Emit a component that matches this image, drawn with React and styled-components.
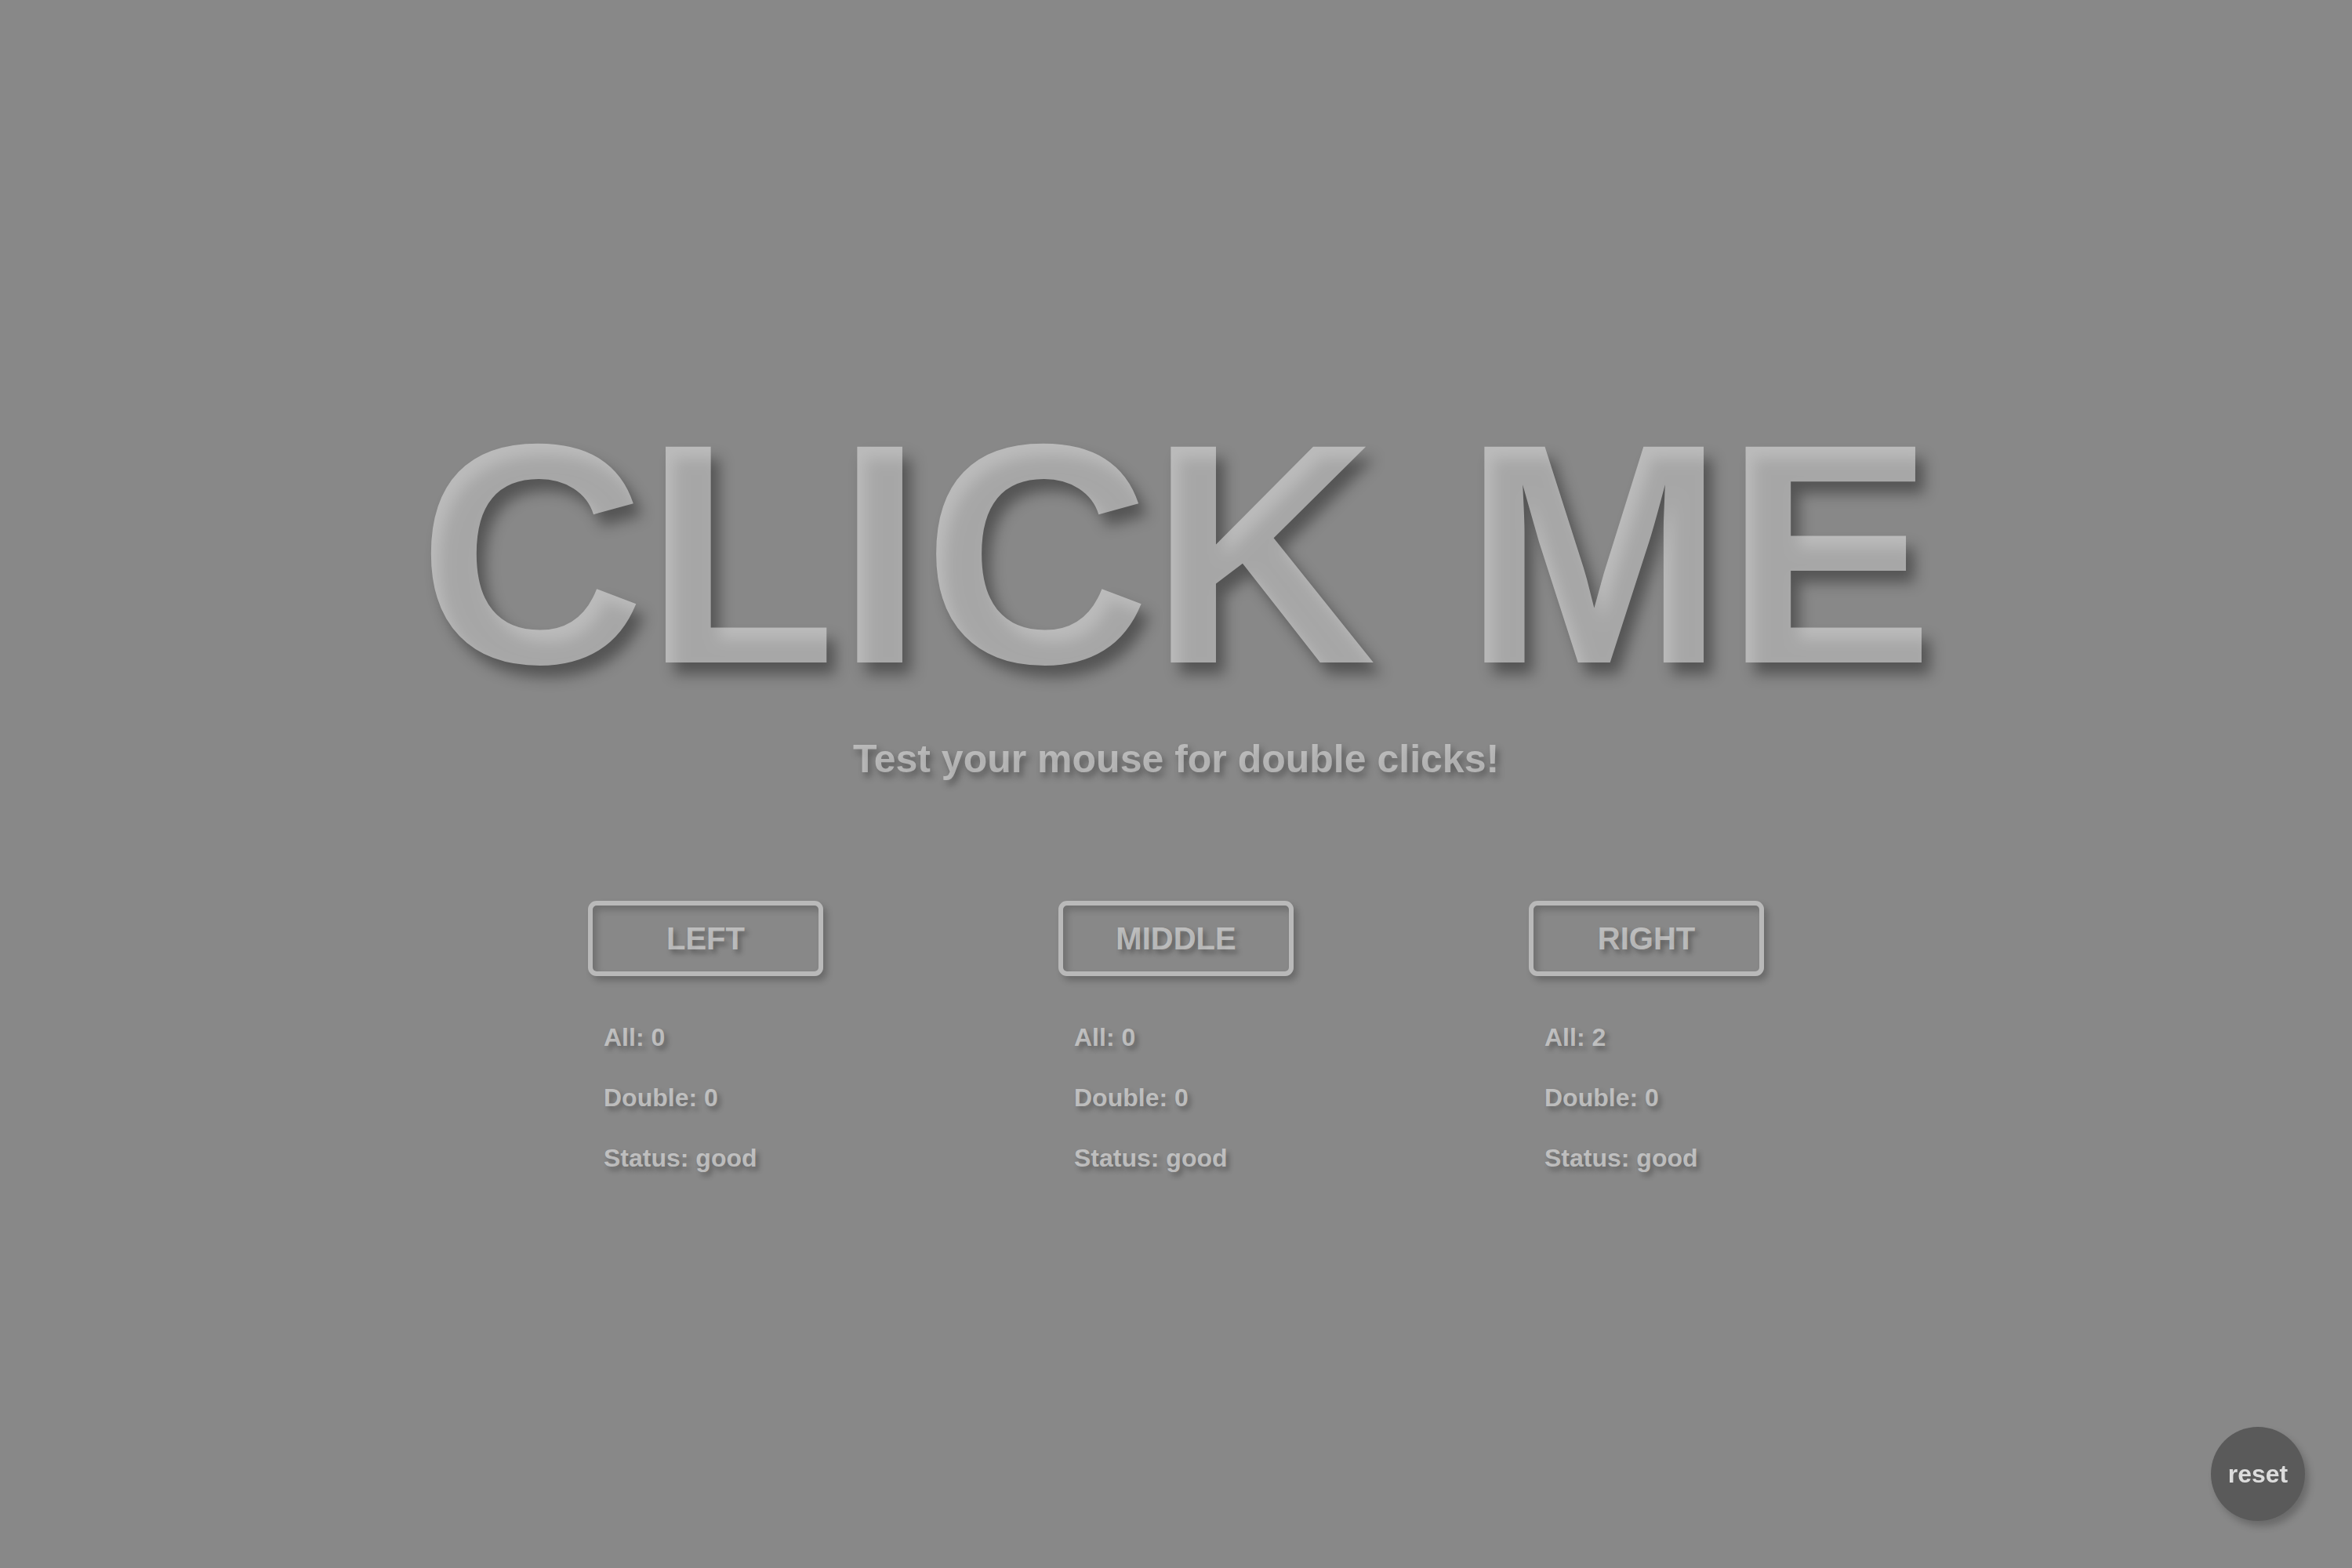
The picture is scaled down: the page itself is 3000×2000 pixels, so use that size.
import React, { useState } from 'react'
import styled, { createGlobalStyle } from 'styled-components'

const GlobalStyle = createGlobalStyle`
    * {
        box-sizing: border-box;
    }
    html, body {
        margin: 0;
        padding: 0;
        background: #888888;
        font-family: "Liberation Sans", Arial, sans-serif;
    }
`

const Page = styled.main`
    height: 100vh;
    overflow: hidden;
    display: flex;
    flex-direction: column;
    align-items: center;
    padding-top: 507px;
    background: #888888;
    user-select: none;
`

const Title = styled.h1`
    margin: 0;
    font-size: 400px;
    line-height: 1;
    font-weight: 700;
    color: rgba(222, 222, 222, 0.6);
    text-shadow: 11px 15px 18px rgba(0, 0, 0, 0.38);
    cursor: pointer;
`

const Subtitle = styled.p`
    margin: 36px 0 0;
    font-size: 50px;
    line-height: 1;
    font-weight: 700;
    color: rgba(220, 220, 220, 0.62);
    text-shadow: 4px 6px 8px rgba(0, 0, 0, 0.35);
`

const Columns = styled.section`
    margin-top: 156px;
    display: grid;
    grid-template-columns: repeat(3, 300px);
    column-gap: 300px;
`

const Column = styled.div`
    display: flex;
    flex-direction: column;
`

const ButtonLabel = styled.div`
    width: 300px;
    height: 96px;
    display: flex;
    align-items: center;
    justify-content: center;
    border: 6px solid #b9b9b9;
    border-radius: 11px;
    font-size: 40px;
    line-height: 1;
    font-weight: 700;
    color: rgba(220, 220, 220, 0.68);
    text-shadow: 4px 5px 6px rgba(0, 0, 0, 0.3);
    box-shadow: 5px 6px 9px rgba(0, 0, 0, 0.22), inset 5px 6px 9px rgba(0, 0, 0, 0.18);
`

const Stats = styled.ul`
    list-style: none;
    margin: 62px 0 0;
    padding: 0 0 0 20px;
    display: flex;
    flex-direction: column;
    gap: 45px;
`

const Stat = styled.li`
    font-size: 32px;
    line-height: 1;
    font-weight: 700;
    color: rgba(220, 220, 220, 0.7);
    text-shadow: 4px 5px 6px rgba(0, 0, 0, 0.3);
`

const ResetButton = styled.button`
    position: fixed;
    right: 60px;
    bottom: 60px;
    width: 120px;
    height: 120px;
    border: none;
    border-radius: 50%;
    background: #5a5a5a;
    color: #dcdcdc;
    font-family: "Liberation Sans", Arial, sans-serif;
    font-size: 32px;
    font-weight: 700;
    line-height: 1;
    padding: 0;
    cursor: pointer;
    box-shadow: 5px 7px 10px rgba(0, 0, 0, 0.22);
`

const initial = {
    left: { all: 0, double: 0 },
    middle: { all: 0, double: 0 },
    right: { all: 2, double: 0 },
}

export default function App() {
    const [counts, setCounts] = useState(initial)

    const buttons = [
        { key: 'left', label: 'LEFT' },
        { key: 'middle', label: 'MIDDLE' },
        { key: 'right', label: 'RIGHT' },
    ]

    const handleReset = () => {
        setCounts({
            left: { all: 0, double: 0 },
            middle: { all: 0, double: 0 },
            right: { all: 0, double: 0 },
        })
    }

    return (
        <>
            <GlobalStyle />
            <Page>
                <Title>CLICK ME</Title>
                <Subtitle>Test your mouse for double clicks!</Subtitle>
                <Columns>
                    {buttons.map(b => (
                        <Column key={b.key}>
                            <ButtonLabel>{b.label}</ButtonLabel>
                            <Stats>
                                <Stat>All: {counts[b.key].all}</Stat>
                                <Stat>Double: {counts[b.key].double}</Stat>
                                <Stat>Status: {counts[b.key].double > 0 ? 'bad' : 'good'}</Stat>
                            </Stats>
                        </Column>
                    ))}
                </Columns>
            </Page>
            <ResetButton onClick={handleReset}>reset</ResetButton>
        </>
    )
}
